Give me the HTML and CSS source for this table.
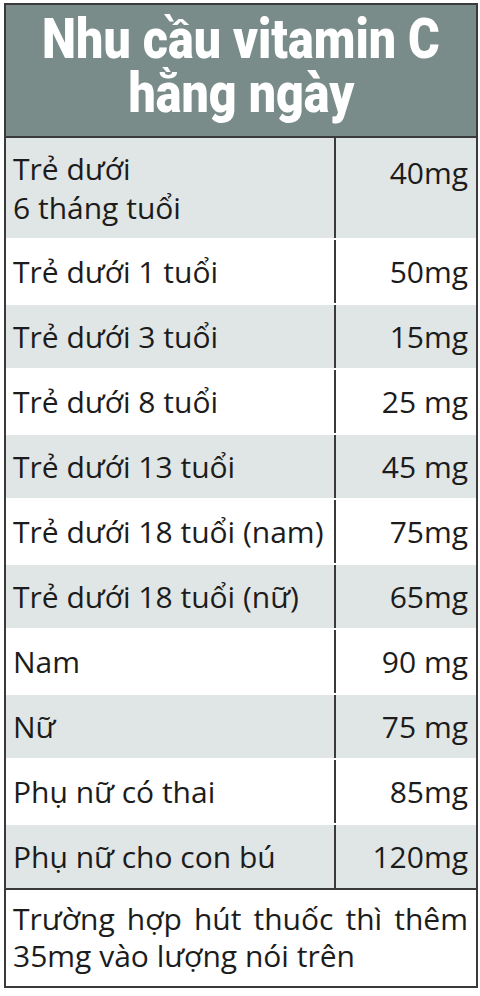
FILE: index.html
```html
<!DOCTYPE html>
<html lang="vi">
<head>
<meta charset="utf-8">
<link rel="stylesheet" href="styles.css">
</head>
<body>
<div class="card">
  <div class="head">
    <h1 class="title"><span class="tl">Nhu cầu vitamin C</span><span class="tl">hằng ngày</span></h1>
  </div>
  <div class="rows">
    <div class="row shade tall"><div class="label">Trẻ dưới<br>6 tháng tuổi</div><div class="val top">40mg</div></div>
    <div class="row"><div class="label">Trẻ dưới 1 tuổi</div><div class="val">50mg</div></div>
    <div class="row shade"><div class="label">Trẻ dưới 3 tuổi</div><div class="val">15mg</div></div>
    <div class="row"><div class="label">Trẻ dưới 8 tuổi</div><div class="val">25 mg</div></div>
    <div class="row shade"><div class="label">Trẻ dưới 13 tuổi</div><div class="val">45 mg</div></div>
    <div class="row"><div class="label">Trẻ dưới 18 tuổi (nam)</div><div class="val">75mg</div></div>
    <div class="row shade"><div class="label">Trẻ dưới 18 tuổi (nữ)</div><div class="val">65mg</div></div>
    <div class="row"><div class="label">Nam</div><div class="val">90 mg</div></div>
    <div class="row shade"><div class="label">Nữ</div><div class="val">75 mg</div></div>
    <div class="row"><div class="label">Phụ nữ có thai</div><div class="val">85mg</div></div>
    <div class="row shade"><div class="label">Phụ nữ cho con bú</div><div class="val">120mg</div></div>
  </div>
  <div class="foot">Trường hợp hút thuốc thì thêm 35mg vào lượng nói trên</div>
</div>
</body>
</html>
```

FILE: styles.css
```css
html, body { margin: 0; padding: 0; background: #ffffff; }
body { width: 480px; height: 996px; overflow: hidden; }
.card {
  margin: 3px 0 0 4px;
  width: 470px;
  border: 2px solid #3a3a3a;
  font-family: "Open Sans", "Noto Sans", sans-serif;
  color: #1c1c1c;
}
.head {
  background: #7a8c89;
  height: 131px;
  border-bottom: 2px solid #3a3a3a;
  display: flex;
  align-items: center;
  justify-content: center;
}
.title {
  margin: 0 0 10px 0;
  display: flex;
  flex-direction: column;
  align-items: center;
  color: #ffffff;
  font-family: "Roboto", "Liberation Sans", sans-serif;
  font-weight: 900;
  font-size: 55px;
  line-height: 54px;
  white-space: nowrap;
}
.tl { display: block; transform: scaleX(0.88); }
.rows { display: flex; flex-direction: column; gap: 2px; background: #ffffff; }
.row { display: flex; height: 63px; }
.row.tall { height: 100px; }
.shade { background: #dfe6e5; }
.label {
  width: 330px;
  box-sizing: border-box;
  padding-left: 7px;
  border-right: 2px solid #3a3a3a;
  margin-right: 2px;
  display: flex;
  align-items: center;
  font-size: 30px;
  line-height: 39px;
}
.val {
  flex: 1;
  display: flex;
  align-items: center;
  justify-content: flex-end;
  padding-right: 8px;
  font-size: 30px;
}
.val.top { align-items: flex-start; padding-top: 14px; }
.foot {
  border-top: 2px solid #3a3a3a;
  padding: 10px 8px 12px 7px;
  font-size: 30px;
  line-height: 37px;
  text-align: justify;
  text-align-last: left;
}
```
